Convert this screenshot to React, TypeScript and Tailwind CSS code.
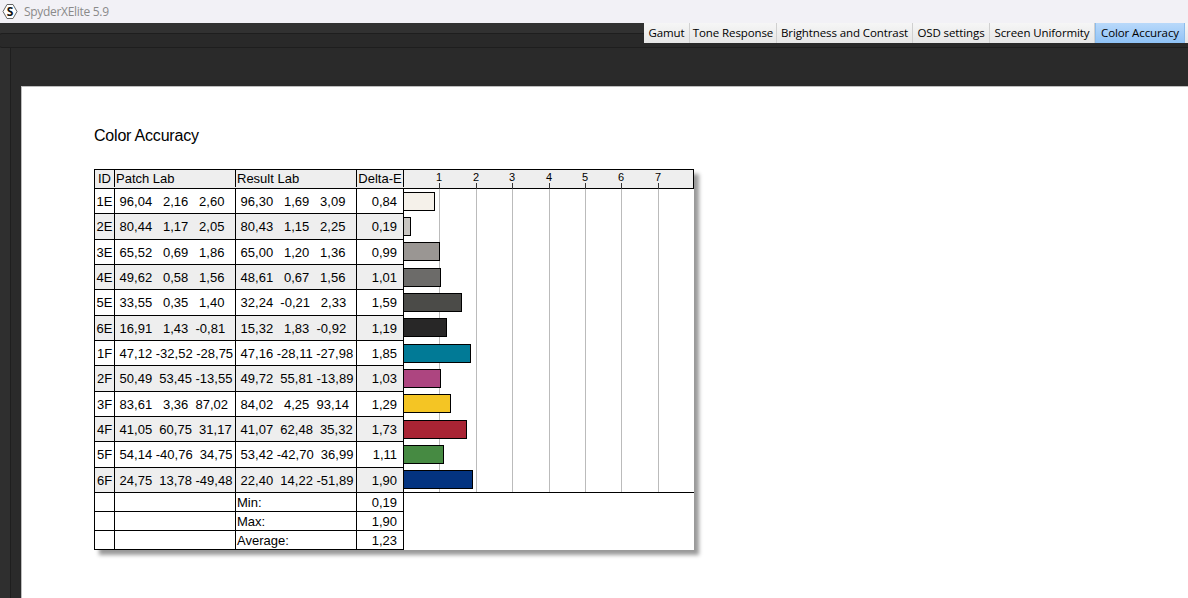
const tabs = [
  { label: "Gamut", w: "w-[46px]" },
  { label: "Tone Response", w: "w-[87px]" },
  { label: "Brightness and Contrast", w: "w-[136px]" },
  { label: "OSD settings", w: "w-[77px]" },
  { label: "Screen Uniformity", w: "w-[105px]" },
  { label: "Color Accuracy", w: "w-[90px]" },
];

const rows = [
  { id: "1E", patch: ["96,04", "2,16", "2,60"], result: ["96,30", "1,69", "3,09"], de: 0.84, color: "#f5f1ea", h: "h-[24px]", pt: "pt-[3px]" },
  { id: "2E", patch: ["80,44", "1,17", "2,05"], result: ["80,43", "1,15", "2,25"], de: 0.19, color: "#c8c5c1", h: "h-[26px]", pt: "pt-[4px]" },
  { id: "3E", patch: ["65,52", "0,69", "1,86"], result: ["65,00", "1,20", "1,36"], de: 0.99, color: "#9a9693", h: "h-[25px]", pt: "pt-[3px]" },
  { id: "4E", patch: ["49,62", "0,58", "1,56"], result: ["48,61", "0,67", "1,56"], de: 1.01, color: "#6c6b69", h: "h-[25px]", pt: "pt-[4px]" },
  { id: "5E", patch: ["33,55", "0,35", "1,40"], result: ["32,24", "-0,21", "2,33"], de: 1.59, color: "#4b4b48", h: "h-[26px]", pt: "pt-[4px]" },
  { id: "6E", patch: ["16,91", "1,43", "-0,81"], result: ["15,32", "1,83", "-0,92"], de: 1.19, color: "#282727", h: "h-[25px]", pt: "pt-[3px]" },
  { id: "1F", patch: ["47,12", "-32,52", "-28,75"], result: ["47,16", "-28,11", "-27,98"], de: 1.85, color: "#017a96", h: "h-[25px]", pt: "pt-[4px]" },
  { id: "2F", patch: ["50,49", "53,45", "-13,55"], result: ["49,72", "55,81", "-13,89"], de: 1.03, color: "#ad4580", h: "h-[26px]", pt: "pt-[4px]" },
  { id: "3F", patch: ["83,61", "3,36", "87,02"], result: ["84,02", "4,25", "93,14"], de: 1.29, color: "#f4c524", h: "h-[25px]", pt: "pt-[3px]" },
  { id: "4F", patch: ["41,05", "60,75", "31,17"], result: ["41,07", "62,48", "35,32"], de: 1.73, color: "#a92434", h: "h-[25px]", pt: "pt-[4px]" },
  { id: "5F", patch: ["54,14", "-40,76", "34,75"], result: ["53,42", "-42,70", "36,99"], de: 1.11, color: "#468a42", h: "h-[26px]", pt: "pt-[4px]" },
  { id: "6F", patch: ["24,75", "13,78", "-49,48"], result: ["22,40", "14,22", "-51,89"], de: 1.9, color: "#033380", h: "h-[25px]", pt: "pt-[3px]" },
];

const summary = [
  { label: "Min:", value: "0,19" },
  { label: "Max:", value: "1,90" },
  { label: "Average:", value: "1,23" },
];

// gridline offsets from the right edge of the Delta-E column
const ticks = [35, 72, 108, 145, 181, 217, 254];
const UNIT = 36.2;

// the source table pads every value to 6 chars with spaces
const lab = (values: string[]) => values.map((v) => v.padStart(6, " ")).join(" ");

export default function App() {
  return (
    <div className="flex h-[598px] w-[1188px] flex-col overflow-hidden bg-[#2a2a2a] font-['Liberation_Sans',Arial,sans-serif]">
      <header className="flex h-[23px] shrink-0 items-center bg-[#f2f1f6] pl-[2px] font-['Open_Sans',sans-serif] text-[12px] tracking-[-0.3px] text-[#8a8a8a]">
        <svg width="16" height="17" viewBox="0 0 16 17" className="mr-[6px]">
          <path d="M5 1.5 H11 L15 8.5 L11 15.5 H5 L1 8.5 Z" fill="#fff" stroke="#666" strokeWidth="1" strokeLinejoin="round" />
          <text x="8" y="12.5" textAnchor="middle" fontSize="12" fontWeight="700" fill="#111" letterSpacing="0">
            S
          </text>
        </svg>
        SpyderXElite 5.9
      </header>

      <div className="relative flex flex-1 flex-col">
        <div className="h-[10px] shrink-0 bg-[#313131]" />
        <div className="h-[15px] shrink-0 rounded-l-[2px] border-y border-[#1e1e1e] bg-[#292929]" />

        <nav className="absolute top-0 right-0 flex h-[20px] bg-gradient-to-b from-[#f6f6f6] to-[#e6e6e6] pr-[3px] font-['Open_Sans',sans-serif] text-[11.5px] tracking-[-0.1px] text-black">
          {tabs.map((t) => (
            <div
              key={t.label}
              className={
                t.label === "Color Accuracy"
                  ? `flex ${t.w} items-center justify-center border-x border-[#8cbcec] bg-gradient-to-b from-[#b9d9fa] to-[#8fc2f6] pb-px`
                  : `flex ${t.w} items-center justify-center border-r border-[#d0d0d0] pb-px`
              }
            >
              {t.label}
            </div>
          ))}
        </nav>

        <div className="flex flex-1">
          <div className="w-[11px] shrink-0 border-r border-[#1e1e1e] bg-[#2f2f2f]" />
          <div className="flex flex-1 flex-col pt-[38px] pl-[10px]">
            <main className="flex-1 border-t border-l border-[#bdbdbd] bg-white pt-[39px] pl-[72px] text-black">
              <h1 className="h-[43px] text-[16px] leading-[19px] tracking-[-0.2px]">Color Accuracy</h1>

              <div className="w-[600px] text-[13px] leading-none shadow-[5px_5px_4px_rgba(0,0,0,0.4)]">
                <div className="flex h-[20px] border border-black bg-[#eeeeee] pb-px">
                  <div className="flex w-[20px] items-center justify-center border-r border-black">ID</div>
                  <div className="flex w-[121px] items-center border-r border-black pl-[1px]">Patch Lab</div>
                  <div className="flex w-[121px] items-center border-r border-black pl-[1px]">Result Lab</div>
                  <div className="flex w-[47px] items-center justify-center border-r border-black whitespace-nowrap">Delta-E</div>
                  <div className="relative flex-1">
                    {ticks.map((x, i) => (
                      <div key={x} className="absolute top-0 h-full" style={{ left: x - 3 }}>
                        <span className="absolute top-[1px] left-0 text-[11px] leading-[12px]">{i + 1}</span>
                        <span className="absolute top-[13px] left-[3px] h-[6px] w-px bg-[#333]" />
                      </div>
                    ))}
                  </div>
                </div>

                <div className="relative border-l border-black">
                  <div className="absolute top-0 right-0 bottom-0 left-[309px]">
                    {ticks.map((x) => (
                      <div key={x} className="absolute top-0 h-full w-px bg-[#bbbbbb]" style={{ left: x }} />
                    ))}
                  </div>
                  {rows.map((r, i) => (
                    <div key={r.id} className={`relative flex ${r.h}`}>
                      <div className={`flex flex-none ${i > 0 ? "border-t border-black" : ""} ${i % 2 ? "bg-[#eeeeee]" : "bg-white"}`}>
                        <div className="flex w-[20px] items-center justify-center border-r border-black">{r.id}</div>
                        <div className="flex w-[121px] items-center border-r border-black pl-[1px] whitespace-pre">{lab(r.patch)}</div>
                        <div className="flex w-[121px] items-center border-r border-black pl-[1px] whitespace-pre">{lab(r.result)}</div>
                        <div className="flex w-[47px] items-center justify-end border-r border-black pr-[6px]">{r.de.toFixed(2).replace(".", ",")}</div>
                      </div>
                      <div className={`flex-1 ${r.pt}`}>
                        <div
                          className="h-[19px] border border-l-0 border-black"
                          style={{ width: r.de * UNIT + 0.1, background: r.color }}
                        />
                      </div>
                    </div>
                  ))}
                </div>

                <div className="border-t border-black bg-white">
                  {summary.map((s) => (
                    <div key={s.label} className="flex h-[19px] w-[310px] border-r border-b border-l border-black">
                      <div className="w-[20px] border-r border-black" />
                      <div className="w-[121px] border-r border-black" />
                      <div className="flex w-[121px] items-center border-r border-black pl-[1px]">{s.label}</div>
                      <div className="flex w-[46px] items-center justify-end pr-[6px]">{s.value}</div>
                    </div>
                  ))}
                </div>
              </div>
            </main>
          </div>
        </div>
      </div>
    </div>
  );
}
